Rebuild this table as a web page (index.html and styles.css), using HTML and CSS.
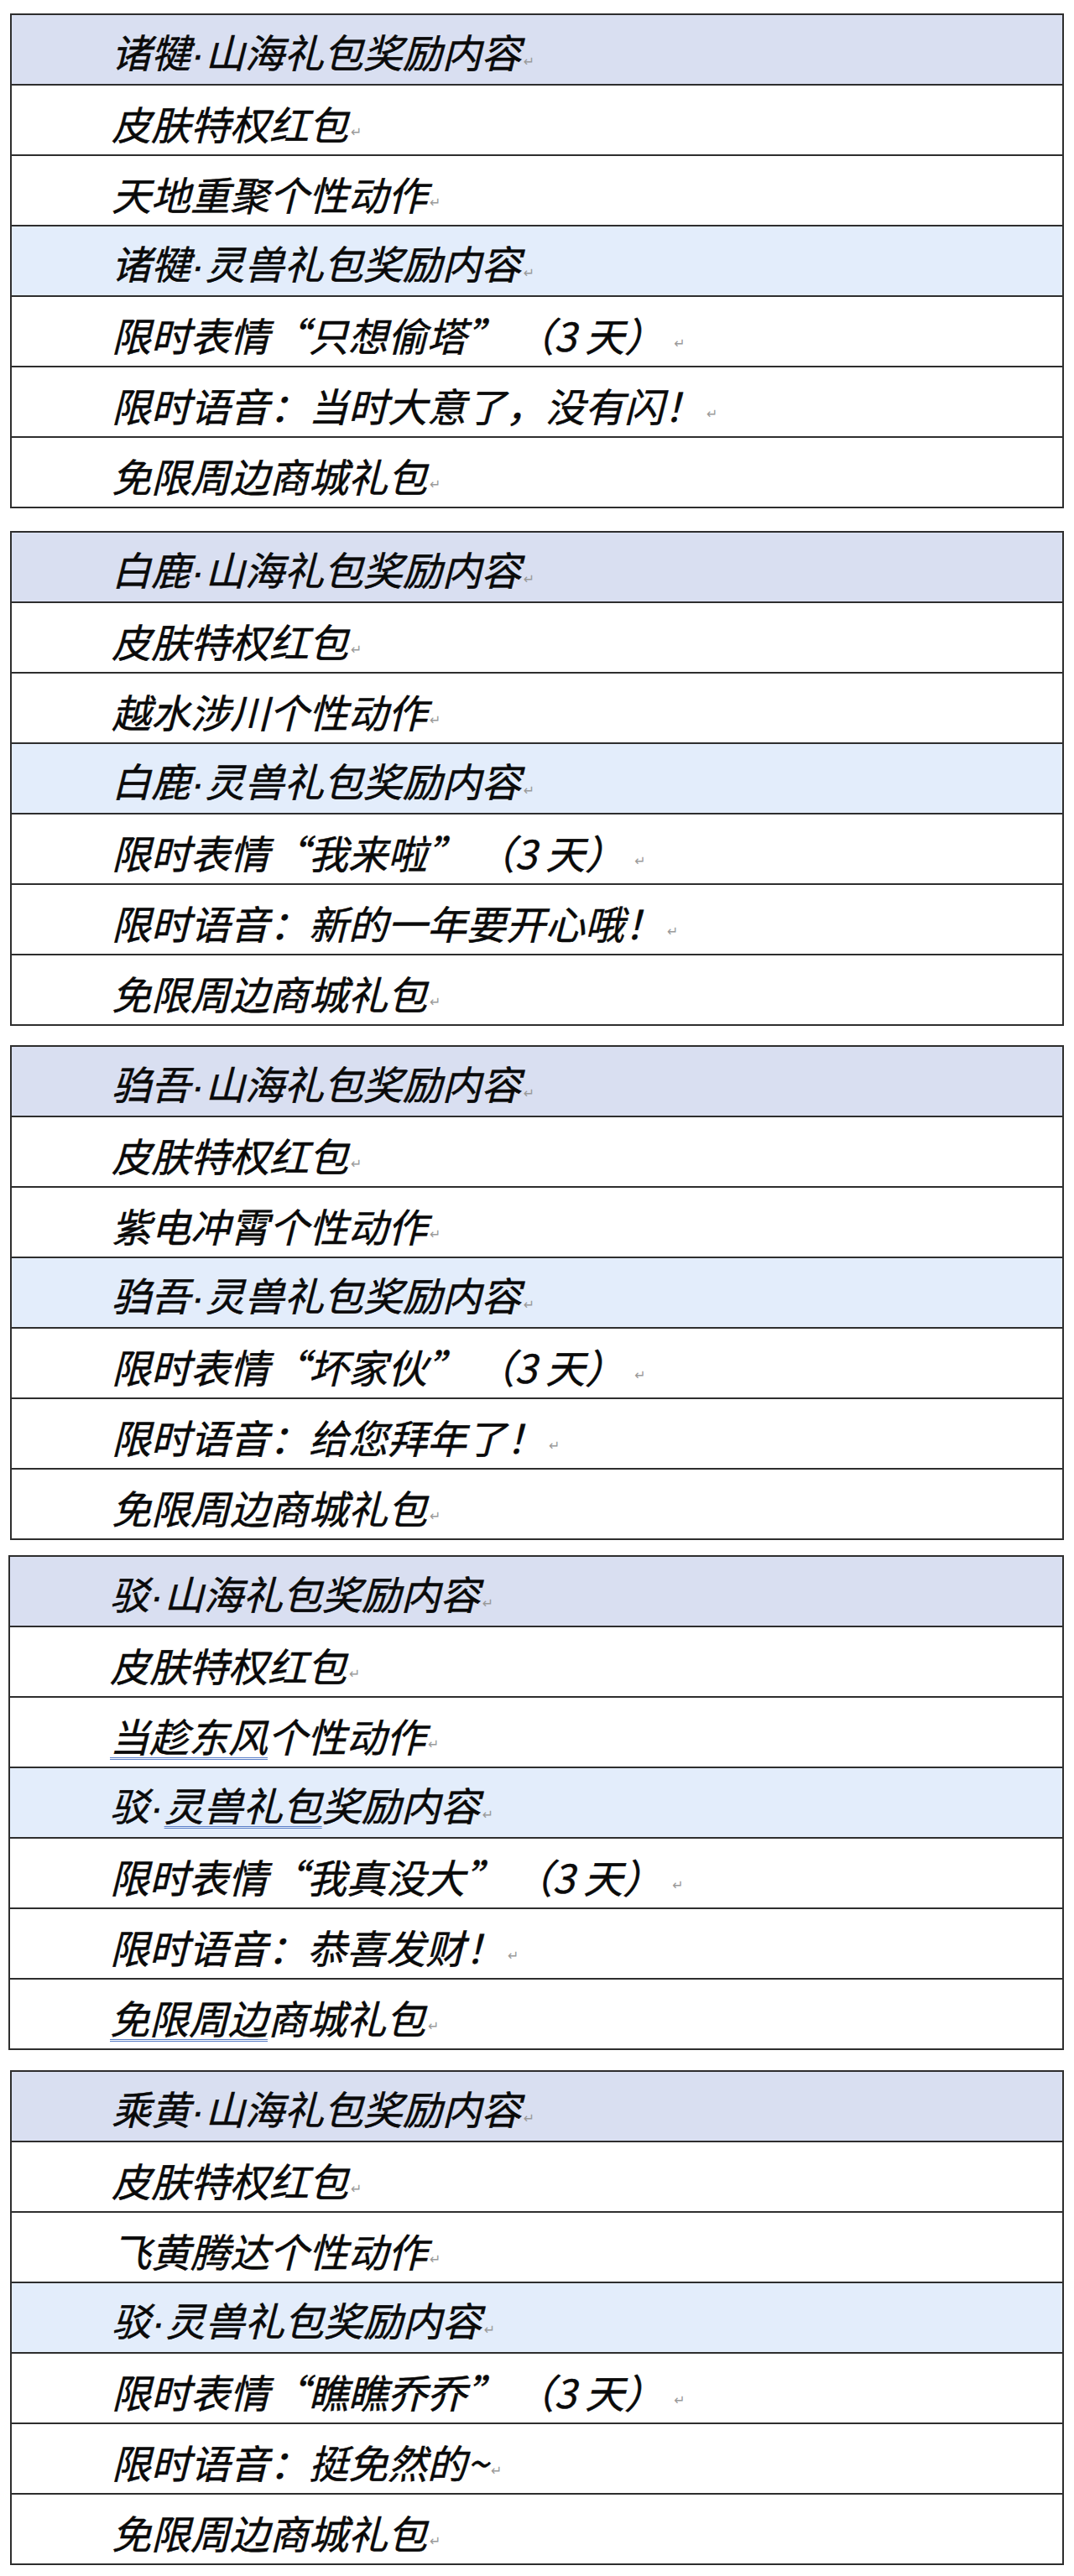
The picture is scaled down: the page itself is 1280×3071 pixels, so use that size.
FILE: index.html
```html
<!DOCTYPE html>
<html lang="zh-CN">
<head>
<meta charset="utf-8">
<title>礼包奖励内容</title>
<link rel="stylesheet" href="styles.css">
</head>
<body>
<main class="page">
  <section class="sheet">
    <div class="row head1"><span class="txt">诸犍<span class="dot">·</span>山海礼包奖励内容</span><span class="pm">↵</span></div>
    <div class="row"><span class="txt">皮肤特权红包</span><span class="pm">↵</span></div>
    <div class="row"><span class="txt">天地重聚个性动作</span><span class="pm">↵</span></div>
    <div class="row head2"><span class="txt">诸犍<span class="dot">·</span>灵兽礼包奖励内容</span><span class="pm">↵</span></div>
    <div class="row"><span class="txt">限时表情“只想偷塔” （3 天）</span><span class="pm gap">↵</span></div>
    <div class="row"><span class="txt">限时语音：当时大意了，没有闪！</span><span class="pm bang">↵</span></div>
    <div class="row"><span class="txt">免限周边商城礼包</span><span class="pm">↵</span></div>
  </section>
  <section class="sheet">
    <div class="row head1"><span class="txt">白鹿<span class="dot">·</span>山海礼包奖励内容</span><span class="pm">↵</span></div>
    <div class="row"><span class="txt">皮肤特权红包</span><span class="pm">↵</span></div>
    <div class="row"><span class="txt">越水涉川个性动作</span><span class="pm">↵</span></div>
    <div class="row head2"><span class="txt">白鹿<span class="dot">·</span>灵兽礼包奖励内容</span><span class="pm">↵</span></div>
    <div class="row"><span class="txt">限时表情“我来啦” （3 天）</span><span class="pm gap">↵</span></div>
    <div class="row"><span class="txt">限时语音：新的一年要开心哦！</span><span class="pm bang">↵</span></div>
    <div class="row"><span class="txt">免限周边商城礼包</span><span class="pm">↵</span></div>
  </section>
  <section class="sheet">
    <div class="row head1"><span class="txt">驺吾<span class="dot">·</span>山海礼包奖励内容</span><span class="pm">↵</span></div>
    <div class="row"><span class="txt">皮肤特权红包</span><span class="pm">↵</span></div>
    <div class="row"><span class="txt">紫电冲霄个性动作</span><span class="pm">↵</span></div>
    <div class="row head2"><span class="txt">驺吾<span class="dot">·</span>灵兽礼包奖励内容</span><span class="pm">↵</span></div>
    <div class="row"><span class="txt">限时表情“坏家伙” （3 天）</span><span class="pm gap">↵</span></div>
    <div class="row"><span class="txt">限时语音：给您拜年了！</span><span class="pm bang">↵</span></div>
    <div class="row"><span class="txt">免限周边商城礼包</span><span class="pm">↵</span></div>
  </section>
  <section class="sheet shifted">
    <div class="row head1"><span class="txt">驳<span class="dot">·</span>山海礼包奖励内容</span><span class="pm">↵</span></div>
    <div class="row"><span class="txt">皮肤特权红包</span><span class="pm">↵</span></div>
    <div class="row"><span class="txt"><span class="gram">当趁东风</span>个性动作</span><span class="pm">↵</span></div>
    <div class="row head2"><span class="txt">驳<span class="dot">·</span><span class="gram">灵兽礼包</span>奖励内容</span><span class="pm">↵</span></div>
    <div class="row"><span class="txt">限时表情“我真没大” （3 天）</span><span class="pm gap">↵</span></div>
    <div class="row"><span class="txt">限时语音：恭喜发财！</span><span class="pm bang">↵</span></div>
    <div class="row"><span class="txt"><span class="gram">免限周边</span>商城礼包</span><span class="pm">↵</span></div>
  </section>
  <section class="sheet">
    <div class="row head1"><span class="txt">乘黄<span class="dot">·</span>山海礼包奖励内容</span><span class="pm">↵</span></div>
    <div class="row"><span class="txt">皮肤特权红包</span><span class="pm">↵</span></div>
    <div class="row"><span class="txt">飞黄腾达个性动作</span><span class="pm">↵</span></div>
    <div class="row head2"><span class="txt">驳<span class="dot">·</span>灵兽礼包奖励内容</span><span class="pm">↵</span></div>
    <div class="row"><span class="txt">限时表情“瞧瞧乔乔” （3 天）</span><span class="pm gap">↵</span></div>
    <div class="row"><span class="txt">限时语音：挺免然的~</span><span class="pm">↵</span></div>
    <div class="row"><span class="txt">免限周边商城礼包</span><span class="pm">↵</span></div>
  </section>
</main>
</body>
</html>
```

FILE: styles.css
```css
html, body {
  margin: 0;
  padding: 0;
  background: #ffffff;
}

.page {
  display: flex;
  flex-direction: column;
  padding: 16px 12px 0 12px;
  box-sizing: border-box;
  width: 1280px;
}

.sheet {
  display: flex;
  flex-direction: column;
  border: 2px solid #2e2e2e;
  width: 1256px;
  box-sizing: border-box;
  margin-bottom: 24px;
}

.sheet:nth-child(1) { margin-bottom: 27px; }
.sheet:nth-child(2) { margin-bottom: 23px; }
.sheet:nth-child(3) { margin-bottom: 18px; }
.sheet:nth-child(4) { margin-bottom: 24px; }

.sheet.shifted {
  margin-left: -2px;
  width: 1258px;
}

.row {
  display: flex;
  align-items: center;
  padding: 6px 0 0 119px;
  box-sizing: content-box;
  height: 76px;
  border-top: 2px solid #2e2e2e;
  background: #ffffff;
}

.row:first-child {
  border-top: none;
}

.row.head1 {
  background: #d9dff1;
}

.row.head2 {
  background: #e3edfb;
}

.txt {
  font-family: "Noto Sans CJK SC", "Noto Sans", sans-serif;
  font-style: italic;
  font-size: 47px;
  line-height: 1;
  color: #0a0a0a;
  white-space: pre;
  -webkit-text-stroke: 0.5px #0a0a0a;
}

.dot {
  font-family: "Liberation Sans", sans-serif;
  padding: 0 1px;
}

.pm {
  font-family: "DejaVu Sans", sans-serif;
  font-size: 16px;
  color: #9a9a9a;
  margin-left: 3px;
  margin-top: 22px;
}

.pm.gap {
  margin-left: 12px;
}

.pm.bang {
  margin-left: 4px;
}

.gram {
  text-decoration: underline double #5a7fc8;
  text-decoration-thickness: 1px;
  text-underline-offset: 6px;
  -webkit-text-stroke: 0.5px #0a0a0a;
}
```
